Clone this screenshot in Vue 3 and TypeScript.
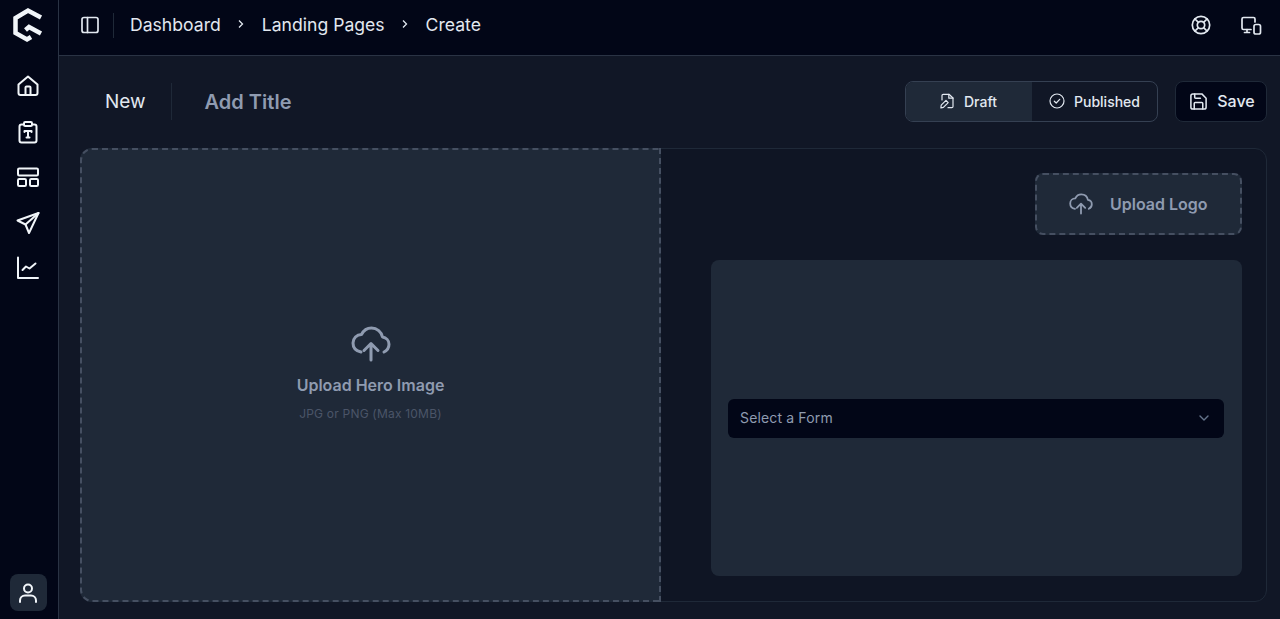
<script setup lang="ts">
const crumbs = ["Dashboard", "Landing Pages", "Create"];
</script>

<template>
  <div class="app">
    <aside class="sidebar">
      <svg class="logo" width="32" height="36" viewBox="0 0 32 36" fill="none" stroke="#f1f5f9" stroke-width="4.500">
        <path d="M29 10.500 16 3.500 3.500 11v15L15 32.500l4-2.500" />
        <path d="M13.500 23 17 20l12 6.500" />
      </svg>
      <nav class="nav">
        <svg class="nav-icon" viewBox="0 0 24 24"><path d="M2.500 10.500 12 2.500l9.500 8V19a2 2 0 0 1-2 2h-15a2 2 0 0 1-2-2z" /><path d="M9.500 21v-7.500a1 1 0 0 1 1-1h3a1 1 0 0 1 1 1V21" /></svg>
        <svg class="nav-icon" viewBox="0 0 24 24"><rect x="3.500" y="4.500" width="17" height="18" rx="2" /><rect x="8" y="2" width="8" height="4" rx="1.200" fill="#020617" /><path d="M8.500 11h7M12 11v6.500M10.500 17.500h3M8.500 11v1M15.500 11v1" /></svg>
        <svg class="nav-icon" viewBox="0 0 24 24"><rect x="2" y="3.500" width="20" height="7" rx="1.200" /><rect x="2" y="14" width="8" height="7" rx="1.200" /><rect x="14" y="14" width="8" height="7" rx="1.200" /></svg>
        <svg class="nav-icon" viewBox="0 0 24 24"><path d="M22.500 2 1.500 9.500l8 4 3.500 8.500z" /><path d="M9.500 13.500 22.500 2" /></svg>
        <svg class="nav-icon" viewBox="0 0 24 24"><path d="M2 1.500V22h20" /><path d="M6.500 14l3.500-3.500 3.500 2 6-5" /></svg>
      </nav>
      <button class="user">
        <svg class="nav-icon" viewBox="0 0 24 24"><circle cx="12" cy="7.500" r="4" /><path d="M4 21v-1.500a5 5 0 0 1 5-5h6a5 5 0 0 1 5 5V21" /></svg>
      </button>
    </aside>

    <div class="content">
      <header class="topbar">
        <svg class="top-icon" viewBox="0 0 20 20"><rect x="2" y="2.500" width="16" height="15" rx="2" /><path d="M7.500 2.500v15" /></svg>
        <span class="top-sep"></span>
        <div class="crumbs">
          <template v-for="(c, i) in crumbs" :key="c">
            <span>{{ c }}</span>
            <svg v-if="i < crumbs.length - 1" class="chev" viewBox="0 0 10 10"><path d="M3 1.500 6.500 5 3 8.500" /></svg>
          </template>
        </div>
        <div class="top-right">
          <svg class="top-icon" viewBox="0 0 20 20"><circle cx="10" cy="10" r="8.700" /><circle cx="10" cy="10" r="3.700" /><path d="M4 4l3.400 3.400M16 4l-3.400 3.400M4 16l3.400-3.400M16 16l-3.400-3.400" /></svg>
          <svg class="device" viewBox="0 0 22 20"><path d="M11 14.500H3.500A1.500 1.500 0 0 1 2 13V4a1.500 1.500 0 0 1 1.500-1.500h10A1.500 1.500 0 0 1 15 4v3" /><path d="M7 14.500v3M4.500 17.500h5" /><rect x="14" y="9.500" width="6.500" height="9.500" rx="1.800" /></svg>
        </div>
      </header>

      <main class="main">
        <div class="toolbar">
          <div class="title-wrap">
            <span class="new">New</span>
            <span class="title-sep"></span>
            <span class="add-title">Add Title</span>
          </div>
          <div class="actions">
            <div class="toggle">
              <button class="seg active">
                <svg class="seg-icon" viewBox="0 0 16 16"><path d="M3 7V2.500A1.200 1.200 0 0 1 4.200 1.300H10L14 5v8.500a1.200 1.200 0 0 1-1.200 1.200H9" /><path d="M9.800 1.300v3.900H14" /><path d="M2.200 12.200 7 7.400l2.200 2.200-4.800 4.800-2.500.4z" /></svg>
                Draft
              </button>
              <button class="seg">
                <svg class="seg-icon" viewBox="0 0 16 16"><circle cx="8" cy="8" r="7" /><path d="M5.300 8.200 7.200 10l3.500-3.700" /></svg>
                Published
              </button>
            </div>
            <button class="save">
              <svg class="save-icon" viewBox="0 0 20 20"><path d="M2 4a2 2 0 0 1 2-2h9.500L18 6.500V16a2 2 0 0 1-2 2H4a2 2 0 0 1-2-2z" /><path d="M5.500 18v-6a1 1 0 0 1 1-1h7a1 1 0 0 1 1 1v6" /><path d="M6 2v3.500a1 1 0 0 0 1 1h5" /></svg>
              Save
            </button>
          </div>
        </div>

        <section class="card">
          <div class="hero">
            <svg class="cloud-lg" viewBox="0 0 40 36">
              <path d="M10 26C5 25 2 21.500 2 17c0-4.800 3.700-8.500 8.500-8.500C12.500 4.500 16.500 2 20.500 2c5.500 0 10 3.800 11 9 3.700.5 6.500 3.500 6.500 7.300 0 3.400-2 6.200-5 7.700" />
              <path d="M20 34V18M13 24.500l7-7 7 7" />
            </svg>
            <div class="hero-title">Upload Hero Image</div>
            <div class="hero-sub">JPG or PNG (Max 10MB)</div>
          </div>
          <div class="side">
            <div class="logo-drop">
              <svg class="cloud-sm" viewBox="0 0 40 36">
                <path d="M10 26C5 25 2 21.500 2 17c0-4.800 3.700-8.500 8.500-8.500C12.500 4.500 16.500 2 20.500 2c5.500 0 10 3.800 11 9 3.700.5 6.500 3.500 6.500 7.300 0 3.400-2 6.200-5 7.700" />
                <path d="M20 34V18M13 24.500l7-7 7 7" />
              </svg>
              <span>Upload Logo</span>
            </div>
            <div class="form-panel">
              <div class="select">
                <span>Select a Form</span>
                <svg class="select-chev" viewBox="0 0 12 12"><path d="M2 4l4 4 4-4" /></svg>
              </div>
            </div>
          </div>
        </section>
      </main>
    </div>
  </div>
</template>

<style scoped>
.app {
  display: flex;
  width: 1280px;
  height: 619px;
  overflow: hidden;
  background: #020617;
  font-family: Inter, "Liberation Sans", sans-serif;
  color: #e2e8f0;
}
.sidebar {
  flex: none;
  box-sizing: border-box;
  width: 59px;
  height: 619px;
  display: flex;
  flex-direction: column;
  align-items: center;
  border-right: 1px solid #2a3344;
  padding: 7px 2px 8px 0;
}
.logo {
  display: block;
}
.nav {
  display: flex;
  flex-direction: column;
  gap: 21.500px;
  margin-top: 31px;
}
.nav-icon {
  display: block;
  width: 24px;
  height: 24px;
  fill: none;
  stroke: #f1f5f9;
  stroke-width: 2;
  stroke-linecap: round;
  stroke-linejoin: round;
}
.user {
  margin-top: auto;
  width: 37px;
  height: 37px;
  border: 0;
  border-radius: 8px;
  background: #1f2938;
  padding: 0;
  display: flex;
  align-items: center;
  justify-content: center;
}
.content {
  flex: 1;
  min-width: 0;
  display: flex;
  flex-direction: column;
}
.topbar {
  flex: none;
  box-sizing: border-box;
  height: 56px;
  display: flex;
  align-items: center;
  padding: 0 18px 5px 21px;
  border-bottom: 1px solid #2a3344;
}
.top-icon {
  width: 20px;
  height: 20px;
  fill: none;
  stroke: #e2e8f0;
  stroke-width: 1.700;
  stroke-linecap: round;
  stroke-linejoin: round;
}
.top-sep {
  width: 1px;
  height: 25px;
  background: #1f2938;
  margin: 0 16px 0 13px;
}
.crumbs {
  display: flex;
  align-items: center;
  gap: 15.500px;
  padding-bottom: 2px;
  font-size: 17.600px;
  color: #e2e8f0;
}
.chev {
  width: 10px;
  height: 10px;
  fill: none;
  stroke: #e2e8f0;
  stroke-width: 1.300;
}
.top-right {
  margin-left: auto;
  display: flex;
  align-items: center;
  gap: 29px;
}
.device {
  width: 22px;
  height: 20px;
  fill: none;
  stroke: #e2e8f0;
  stroke-width: 1.700;
  stroke-linecap: round;
  stroke-linejoin: round;
}
.main {
  flex: 1;
  min-height: 0;
  box-sizing: border-box;
  display: flex;
  flex-direction: column;
  background: #111726;
  padding: 25px 13px 17px 21px;
}
.toolbar {
  flex: none;
  height: 41px;
  display: flex;
  align-items: center;
  justify-content: space-between;
  margin-bottom: 26px;
}
.title-wrap {
  display: flex;
  align-items: center;
  padding-left: 25px;
}
.new {
  font-size: 19px;
  color: #e2e8f0;
}
.title-sep {
  width: 1px;
  height: 37px;
  background: #1f2938;
  margin: 0 33px 0 25px;
}
.add-title {
  font-size: 20px;
  font-weight: 600;
  color: #8f9bb0;
}
.actions {
  display: flex;
  gap: 17px;
}
.toggle {
  box-sizing: border-box;
  width: 253px;
  height: 41px;
  display: flex;
  border: 1px solid #354052;
  border-radius: 8px;
  overflow: hidden;
}
.seg {
  border: 0;
  background: transparent;
  color: #e2e8f0;
  font: 500 14px Inter, "Liberation Sans", sans-serif;
  display: flex;
  align-items: center;
  justify-content: center;
  gap: 9px;
  flex: 1;
  padding: 0 0 1px;
}
.seg.active {
  flex: none;
  width: 126px;
  padding-right: 2px;
  background: #1f2938;
}
.seg-icon {
  width: 16px;
  height: 16px;
  fill: none;
  stroke: #e2e8f0;
  stroke-width: 1.200;
  stroke-linecap: round;
  stroke-linejoin: round;
}
.save {
  box-sizing: border-box;
  width: 92px;
  height: 41px;
  display: flex;
  align-items: center;
  justify-content: center;
  gap: 9px;
  border: 1px solid #1f2938;
  border-radius: 8px;
  background: #020617;
  color: #e2e8f0;
  font: 500 16px Inter, "Liberation Sans", sans-serif;
  padding: 0 0 1px 2px;
}
.save-icon {
  width: 19px;
  height: 19px;
  fill: none;
  stroke: #e2e8f0;
  stroke-width: 1.600;
  stroke-linecap: round;
  stroke-linejoin: round;
}
.card {
  flex: 1;
  min-height: 0;
  display: flex;
  border: 1px solid #1f2938;
  border-radius: 12px;
  background: #0f1524;
}
.hero {
  flex: none;
  box-sizing: border-box;
  width: 581px;
  margin: -1px 0 -1px -1px;
  padding-bottom: 2px;
  display: flex;
  flex-direction: column;
  align-items: center;
  justify-content: center;
  border: 2px dashed #454f61;
  border-radius: 12px 0 0 12px;
  background: #1f2938;
}
.cloud-lg {
  width: 40px;
  height: 36px;
  fill: none;
  stroke: #8f9bb0;
  stroke-width: 3;
  stroke-linecap: round;
  stroke-linejoin: round;
}
.hero-title {
  margin-top: 13px;
  font-size: 16px;
  font-weight: 600;
  color: #8f9bb0;
  line-height: 20px;
}
.hero-sub {
  margin-top: 11px;
  font-size: 12px;
  color: #4b5568;
  line-height: 16px;
  letter-spacing: 0.2px;
}
.side {
  flex: 1;
  min-width: 0;
  display: flex;
  flex-direction: column;
  align-items: flex-end;
  padding: 24px 24px 25px 50px;
}
.logo-drop {
  flex: none;
  box-sizing: border-box;
  width: 207px;
  height: 62px;
  display: flex;
  align-items: center;
  gap: 17px;
  padding-left: 32px;
  border: 2px dashed #454f61;
  border-radius: 8px;
  background: #1f2938;
  font-size: 16px;
  font-weight: 600;
  color: #8f9bb0;
}
.cloud-sm {
  width: 24px;
  height: 22px;
  fill: none;
  stroke: #8f9bb0;
  stroke-width: 3;
  stroke-linecap: round;
  stroke-linejoin: round;
}
.form-panel {
  flex: 1;
  align-self: stretch;
  margin-top: 25px;
  display: flex;
  align-items: center;
  padding: 0 18px 0 17px;
  border-radius: 8px;
  background: #1f2938;
}
.select {
  flex: 1;
  box-sizing: border-box;
  height: 39px;
  display: flex;
  align-items: center;
  justify-content: space-between;
  padding: 0 14px 1px 12px;
  border-radius: 6px;
  background: #020617;
  font-size: 14px;
  letter-spacing: 0.15px;
  color: #8f9bb0;
}
.select-chev {
  width: 12px;
  height: 12px;
  fill: none;
  stroke: #64748b;
  stroke-width: 1.400;
  stroke-linecap: round;
  stroke-linejoin: round;
}
</style>

<style>
body {
  background: #020617;
}
</style>
